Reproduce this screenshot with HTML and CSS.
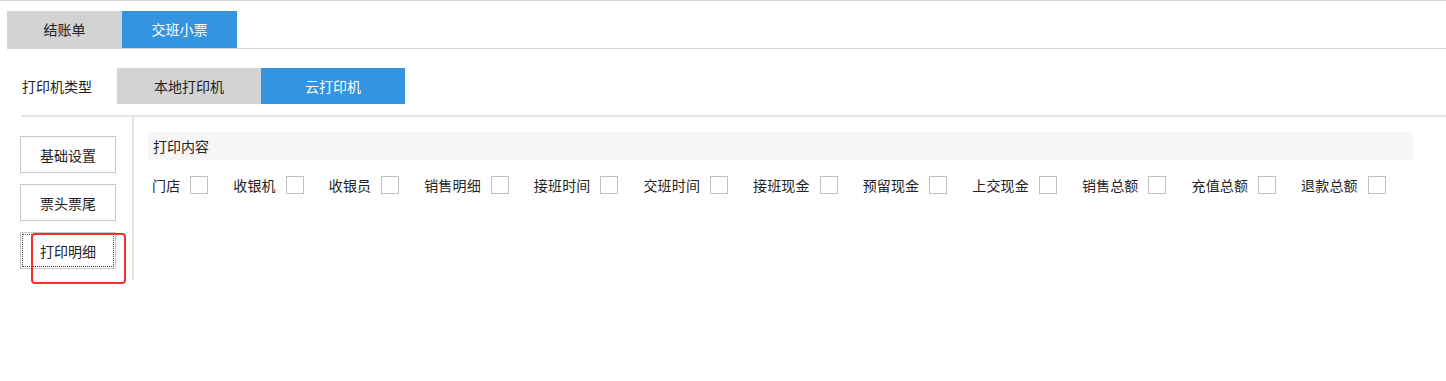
FILE: index.html
```html
<!DOCTYPE html>
<html>
	<head>
		<meta charset="utf-8">
		<title>小票设置</title>
		<link rel="stylesheet" href="styles.css">
	</head>
	<body>
		<div class="tabs">
			<div class="tab">结账单</div>
			<div class="tab tab--active">交班小票</div>
		</div>
		<div class="printer-type">
			<span class="printer-type__label">打印机类型</span>
			<div class="switch">
				<div class="switch__item">本地打印机</div>
				<div class="switch__item switch__item--active">云打印机</div>
			</div>
		</div>
		<div class="rule"></div>
		<div class="settings">
			<div class="side">
				<button class="side-btn">基础设置</button>
				<button class="side-btn">票头票尾</button>
				<button class="side-btn side-btn--focus">打印明细</button>
			</div>
			<div class="panel">
				<div class="panel__title">打印内容</div>
				<div class="options">
					<label class="option">门店<input type="checkbox"></label>
					<label class="option">收银机<input type="checkbox"></label>
					<label class="option">收银员<input type="checkbox"></label>
					<label class="option">销售明细<input type="checkbox"></label>
					<label class="option">接班时间<input type="checkbox"></label>
					<label class="option">交班时间<input type="checkbox"></label>
					<label class="option">接班现金<input type="checkbox"></label>
					<label class="option">预留现金<input type="checkbox"></label>
					<label class="option">上交现金<input type="checkbox"></label>
					<label class="option">销售总额<input type="checkbox"></label>
					<label class="option">充值总额<input type="checkbox"></label>
					<label class="option">退款总额<input type="checkbox"></label>
				</div>
			</div>
		</div>
		<!-- 截图标注 -->
		<div class="mark"></div>
	</body>
</html>
```
FILE: styles.css
```css
body {
	margin: 0;
	border-top: 1px solid #d8d8d8;
	font-family: "Noto Sans CJK SC", "Microsoft YaHei", sans-serif;
	font-size: 14px;
	color: #222;
	position: relative;
	height: 380px;
}
.tabs {
	display: flex;
	margin: 10px 0 0 7px;
	border-bottom: 1px solid #d6d6d6;
}
.tab {
	width: 115px;
	height: 37px;
	line-height: 37px;
	text-align: center;
	background: #d3d3d3;
}
.tab--active {
	background: #3594e0;
	color: #fff;
}
.printer-type {
	display: flex;
	align-items: center;
	margin: 19px 0 0 22px;
}
.printer-type__label {
	width: 95px;
}
.switch {
	display: flex;
}
.switch__item {
	width: 144px;
	height: 36px;
	line-height: 36px;
	text-align: center;
	background: #d3d3d3;
}
.switch__item--active {
	background: #3594e0;
	color: #fff;
}
.rule {
	margin: 11px 0 0 21px;
	height: 2px;
	background: #e6e6e6;
}
.settings {
	display: flex;
}
.side {
	flex-shrink: 0;
	width: 134px;
	height: 163px;
	box-sizing: border-box;
	padding: 19px 0 0 20px;
	border-right: 2px solid #e4e4e4;
	display: flex;
	flex-direction: column;
	gap: 11px;
}
.side-btn {
	width: 96px;
	height: 37px;
	font: inherit;
	color: inherit;
	background: #fff;
	border: 1px solid #c8c8c8;
	padding: 0;
}
.side-btn--focus {
	outline: 1px dotted #444;
	outline-offset: -3px;
}
.panel {
	flex: 1;
	min-width: 0;
	margin: 15px 33px 0 14px;
}
.panel__title {
	height: 28px;
	line-height: 28px;
	padding-left: 5px;
	background: #f6f6f6;
}
.options {
	display: flex;
	margin: 16px 0 0 4px;
}
.option {
	flex-shrink: 0;
	display: flex;
	align-items: center;
	height: 18px;
	white-space: nowrap;
	letter-spacing: 0.15px;
}
.option input {
	-webkit-appearance: none;
	appearance: none;
	width: 18px;
	height: 18px;
	margin: 0 25px 0 10px;
	border: 1px solid #c0c0c0;
	background: #fff;
}
.mark {
	position: absolute;
	left: 31px;
	top: 232px;
	width: 95px;
	height: 51px;
	box-sizing: border-box;
	border: 2px solid #f0322c;
	border-radius: 4px;
}
```
